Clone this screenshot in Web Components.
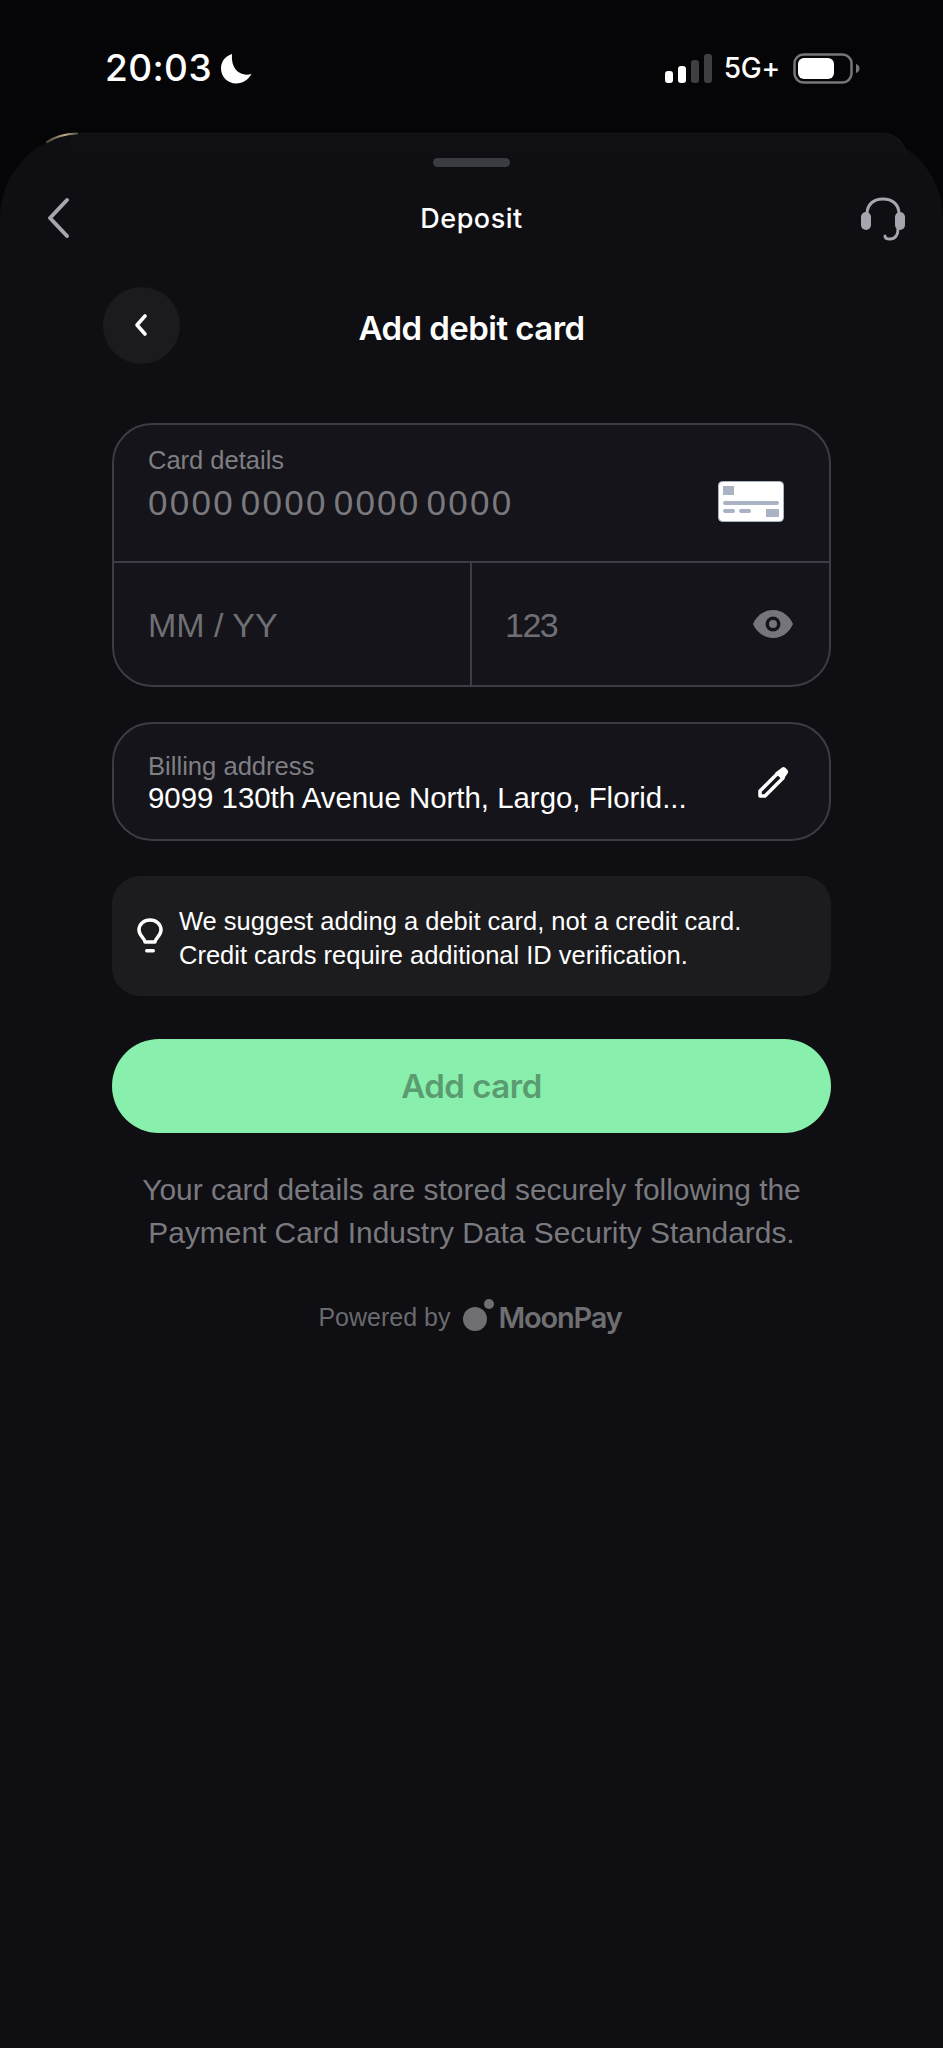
<!DOCTYPE html>
<html>
<head>
<meta charset="utf-8">
<style>
  html, body { margin: 0; padding: 0; background: #050507; }
  body { width: 943px; height: 2048px; overflow: hidden; font-family: "Inter", "Liberation Sans", sans-serif; }
</style>
</head>
<body>
<app-screen>
  <status-bar></status-bar>
  <deposit-sheet>
    <sheet-header title="Deposit"></sheet-header>
    <page-title title="Add debit card"></page-title>
    <card-form></card-form>
    <billing-field label="Billing address" value="9099 130th Avenue North, Largo, Florid..."></billing-field>
    <tip-box>We suggest adding a debit card, not a credit card.<br>Credit cards require additional ID verification.</tip-box>
    <add-button>Add card</add-button>
    <secure-note>Your card details are stored securely following the<br>Payment Card Industry Data Security Standards.</secure-note>
    <powered-by></powered-by>
  </deposit-sheet>
</app-screen>

<script>
const BODY_FONT = '"Liberation Sans", "Inter", sans-serif';

class AppScreen extends HTMLElement {
  constructor() {
    super();
    this.attachShadow({ mode: 'open' }).innerHTML = `
      <style>
        :host { display: flex; flex-direction: column; width: 943px; height: 2048px; position: relative; overflow: hidden; background: #050507; }
        .behind { position: absolute; z-index: 1; left: 70px; right: 37px; top: 133px; height: 22px; border-radius: 0 22px 0 0; background: #0f0f14; box-shadow: inset -1px 1px 0 #16161a; }
        .gold { position: absolute; z-index: 2; left: 44px; top: 130px; }
      </style>
      <div class="behind"></div>
      <svg class="gold" width="36" height="14" viewBox="0 0 36 14"><defs><linearGradient id="g" x1="0" x2="1" y1="0" y2="0"><stop offset="0" stop-color="#4a4234"/><stop offset=".6" stop-color="#c2ad86"/><stop offset="1" stop-color="#5a5244"/></linearGradient></defs><path d="M3 12C12 6 22 4 33 3.500" fill="none" stroke="url(#g)" stroke-width="2.200" stroke-linecap="round"/></svg>
      <slot></slot>
    `;
  }
}

class StatusBar extends HTMLElement {
  constructor() {
    super();
    this.attachShadow({ mode: 'open' }).innerHTML = `
      <style>
        :host { display: flex; align-items: center; height: 133px; box-sizing: border-box; padding: 0 83px 0 105px; position: relative; color: #fff; font-family: "Inter", sans-serif; }
        .inner { display: flex; width: 100%; align-items: center; justify-content: space-between; margin-top: 3px; }
        .left, .right { display: flex; align-items: center; }
        .time { font-size: 37px; font-weight: 500; letter-spacing: 0.4px; line-height: 40px; }
        .moon { margin-left: 9px; }
        .net { font-size: 28px; font-weight: 500; margin: 0 13px 0 12px; letter-spacing: -0.2px; }
      </style>
      <div class="inner">
        <div class="left">
          <span class="time">20:03</span>
          <svg class="moon" width="31" height="31" viewBox="0 0 31 31"><path fill="#fff" d="M11 1C4 3 0 9 0 15.500 0 24 7 30.500 15 30.500 22 30.500 27.500 26.500 30.500 21 20 24 9.500 17 11 1Z"/></svg>
        </div>
        <div class="right">
          <svg width="47" height="29" viewBox="0 0 47 29">
            <rect x="0" y="17" width="8" height="12" rx="3" fill="#fff"/>
            <rect x="13" y="12" width="8" height="17" rx="3" fill="#fff"/>
            <rect x="26" y="6" width="8" height="23" rx="3" fill="#3f3f41"/>
            <rect x="39" y="0" width="8" height="29" rx="3" fill="#3f3f41"/>
          </svg>
          <span class="net">5G+</span>
          <svg width="67" height="31" viewBox="0 0 67 31">
            <rect x="1.500" y="1.500" width="57" height="28" rx="9" fill="none" stroke="#77777a" stroke-width="2.500"/>
            <rect x="5" y="5" width="36" height="21" rx="6" fill="#fff"/>
            <path d="M63 11c2.500 .5 3.500 2.500 3.500 4.500S65.500 19.500 63 20Z" fill="#77777a"/>
          </svg>
        </div>
      </div>
    `;
  }
}

class DepositSheet extends HTMLElement {
  constructor() {
    super();
    this.attachShadow({ mode: 'open' }).innerHTML = `
      <style>
        :host { display: flex; flex-direction: column; flex: 1; position: relative; background: #0e0e13; border-radius: 85px 85px 0 0; color: #fff; font-family: "Inter", sans-serif; }
        .handle { align-self: center; width: 77px; height: 9px; margin-top: 25px; border-radius: 5px; background: #3b3b42; position: relative; z-index: 3; }
        .body { display: flex; flex-direction: column; padding: 0 112px; }
      </style>
      <div class="handle"></div>
      <div class="body"><slot></slot></div>
    `;
  }
}

class SheetHeader extends HTMLElement {
  constructor() {
    super();
    this.attachShadow({ mode: 'open' }).innerHTML = `
      <style>
        :host { display: grid; grid-template-columns: 1fr auto 1fr; align-items: center; height: 72px; margin: 15px -74px 0 -74px; font-size: 27px; font-weight: 500; }
        .title { letter-spacing: 0.5px; }
        .left { margin-left: 8px; }
        .right { justify-self: end; margin-top: 2px; }
      </style>
      <svg class="left" width="24" height="42" viewBox="0 0 24 42"><path d="M21 3 4 21l17 18" fill="none" stroke="#a6a6ae" stroke-width="4" stroke-linecap="round" stroke-linejoin="round"/></svg>
      <span class="title">${this.getAttribute('title')}</span>
      <svg class="right" width="44" height="44" viewBox="0 0 44 44">
        <path d="M6 17C6 7 13 2 22 2S38 7 38 17" fill="none" stroke="#a6a6ae" stroke-width="3"/>
        <rect x="0" y="15" width="10" height="18" rx="5" fill="#a6a6ae"/>
        <rect x="34" y="15" width="10" height="18" rx="5" fill="#a6a6ae"/>
        <path d="M37 32c0 6-3 10-8 10-3 0-5-1-5-3" fill="none" stroke="#a6a6ae" stroke-width="3" stroke-linecap="round"/>
      </svg>
    `;
  }
}

class PageTitle extends HTMLElement {
  constructor() {
    super();
    this.attachShadow({ mode: 'open' }).innerHTML = `
      <style>
        :host { display: flex; align-items: center; justify-content: center; position: relative; height: 77px; margin: 33px 0 0 0; font-size: 33px; font-weight: 600; }
        .back { position: absolute; left: -9px; top: 0; width: 77px; height: 77px; border-radius: 50%; background: #1b1b1f; display: flex; align-items: center; justify-content: center; }
        .title { margin-top: 5px; letter-spacing: -0.55px; }
      </style>
      <div class="back"><svg width="14" height="24" viewBox="0 0 14 24" style="margin:-2px 2px 0 0"><path d="M11 3 3 12l8 9" fill="none" stroke="#fff" stroke-width="3.600" stroke-linecap="round" stroke-linejoin="round"/></svg></div>
      <span class="title">${this.getAttribute('title')}</span>
    `;
  }
}

class CardForm extends HTMLElement {
  constructor() {
    super();
    this.attachShadow({ mode: 'open' }).innerHTML = `
      <style>
        :host { display: grid; grid-template-columns: 356px 1fr; grid-template-rows: 138px 1fr; height: 264px; box-sizing: border-box; margin-top: 59px; border: 2px solid #3c3c47; border-radius: 40px; background: #14141a; overflow: hidden; font-family: ${BODY_FONT}; }
        .top { grid-column: 1 / 3; position: relative; display: flex; justify-content: space-between; padding: 20px 45px 0 34px; border-bottom: 2px solid #3c3c47; box-sizing: border-box; }
        .label { font-size: 25.500px; line-height: 30px; color: #7f7f83; }
        .num { font-size: 35px; line-height: 40px; margin-top: 8px; color: #7a7a7e; letter-spacing: 2.250px; word-spacing: -6px; }
        .cell { display: flex; align-items: center; justify-content: space-between; font-size: 34px; color: #6f6f73; padding: 2px 36px 0 34px; }
        .cell + .cell { border-left: 2px solid #3c3c47; }
        .cvv { letter-spacing: -1.500px; margin-left: -1px; }
        .eye { margin-top: -2px; }
      </style>
      <div class="top">
        <div>
          <div class="label">Card details</div>
          <div class="num">0000 0000 0000 0000</div>
        </div>
        <svg width="66" height="41" viewBox="0 0 66 41" style="margin-top:36px">
          <rect x=".5" y=".5" width="65" height="40" rx="4" fill="#fff" stroke="#a9b3c4"/>
          <rect x="5" y="5" width="11" height="9" fill="#a9b3c4"/>
          <rect x="5" y="20" width="56" height="4" rx="2" fill="#a9b3c4"/>
          <rect x="5" y="28" width="12" height="4" rx="2" fill="#a9b3c4"/>
          <rect x="21" y="28" width="12" height="4" rx="2" fill="#a9b3c4"/>
          <rect x="48" y="28" width="13" height="8" fill="#a9b3c4"/>
        </svg>
      </div>
      <div class="cell">MM / YY</div>
      <div class="cell">
        <span class="cvv">123</span>
        <svg class="eye" width="40" height="28" viewBox="0 0 40 28"><path fill="#76767a" d="M20 0C30 0 37 7 40 14 37 21 30 28 20 28 10 28 3 21 0 14 3 7 10 0 20 0Z"/><circle cx="20" cy="14" r="7.500" fill="#14141a"/><circle cx="20" cy="14" r="4" fill="#76767a"/></svg>
      </div>
    `;
  }
}

class BillingField extends HTMLElement {
  constructor() {
    super();
    this.attachShadow({ mode: 'open' }).innerHTML = `
      <style>
        :host { display: flex; align-items: center; justify-content: space-between; height: 119px; box-sizing: border-box; margin-top: 35px; padding: 0 40px 0 34px; border: 2px solid #3c3c47; border-radius: 40px; background: #14141a; font-family: ${BODY_FONT}; }
        .label { font-size: 25.600px; line-height: 30px; color: #7f7f83; }
        .val { font-size: 29.400px; line-height: 34px; color: #fff; }
        .txt { margin-top: 2px; }
      </style>
      <div class="txt">
        <div class="label">${this.getAttribute('label')}</div>
        <div class="val">${this.getAttribute('value')}</div>
      </div>
      <svg width="32" height="32" viewBox="0 0 32 32"><path d="M3 25 21 7l5 5L8 30H3Z" fill="none" stroke="#fff" stroke-width="3.500" stroke-linejoin="round"/><path d="M18 7 25 1.500Q27 .5 28.500 2L30.500 4Q32 6 30.500 7.500L26 14Z" fill="#fff"/></svg>
    `;
  }
}

class TipBox extends HTMLElement {
  constructor() {
    super();
    this.attachShadow({ mode: 'open' }).innerHTML = `
      <style>
        :host { display: flex; align-items: center; height: 120px; margin-top: 35px; padding: 0 22px 0 25px; box-sizing: border-box; background: #1c1c1e; border-radius: 28px; font-family: ${BODY_FONT}; }
        .txt { margin-left: 16px; font-size: 25.500px; line-height: 34px; color: #fff; margin-top: 3px; }
      </style>
      <svg width="26" height="36" viewBox="0 0 26 36"><path d="M8 24c0-4-6-6-6-12C2 6 7 2 13 2s11 4 11 10c0 6-6 8-6 12Z" fill="none" stroke="#fff" stroke-width="3.500" stroke-linejoin="round"/><rect x="8" y="31" width="10" height="3.500" rx="1.700" fill="#fff"/></svg>
      <div class="txt"><slot></slot></div>
    `;
  }
}

class AddButton extends HTMLElement {
  constructor() {
    super();
    this.attachShadow({ mode: 'open' }).innerHTML = `
      <style>
        :host { display: flex; align-items: center; justify-content: center; height: 94px; margin-top: 43px; border-radius: 47px; background: #88f0ac; color: #5a9c70; font-size: 33px; font-weight: 600; letter-spacing: -0.5px; }
      </style>
      <slot></slot>
    `;
  }
}

class SecureNote extends HTMLElement {
  constructor() {
    super();
    this.attachShadow({ mode: 'open' }).innerHTML = `
      <style>
        :host { display: block; margin-top: 35px; text-align: center; font-size: 29.900px; line-height: 43px; color: #7a7a7e; font-family: ${BODY_FONT}; }
      </style>
      <slot></slot>
    `;
  }
}

class PoweredBy extends HTMLElement {
  constructor() {
    super();
    this.attachShadow({ mode: 'open' }).innerHTML = `
      <style>
        :host { display: flex; align-items: center; justify-content: center; margin: 40px 3px 0 0; color: #6a6a6e; font-size: 25px; height: 46px; font-family: ${BODY_FONT}; }
        .brand { font-family: "Inter", sans-serif; font-weight: 600; font-size: 29px; letter-spacing: -1.200px; color: #6f6f72; }
        svg { margin: -4px 3px 0 13px; }
      </style>
      <span>Powered by</span>
      <svg width="32" height="32" viewBox="0 0 32 32"><circle cx="12" cy="20" r="12" fill="#6f6f72"/><circle cx="26" cy="5" r="5" fill="#6f6f72"/></svg>
      <span class="brand">MoonPay</span>
    `;
  }
}

customElements.define('app-screen', AppScreen);
customElements.define('status-bar', StatusBar);
customElements.define('deposit-sheet', DepositSheet);
customElements.define('sheet-header', SheetHeader);
customElements.define('page-title', PageTitle);
customElements.define('card-form', CardForm);
customElements.define('billing-field', BillingField);
customElements.define('tip-box', TipBox);
customElements.define('add-button', AddButton);
customElements.define('secure-note', SecureNote);
customElements.define('powered-by', PoweredBy);
</script>
</body>
</html>
